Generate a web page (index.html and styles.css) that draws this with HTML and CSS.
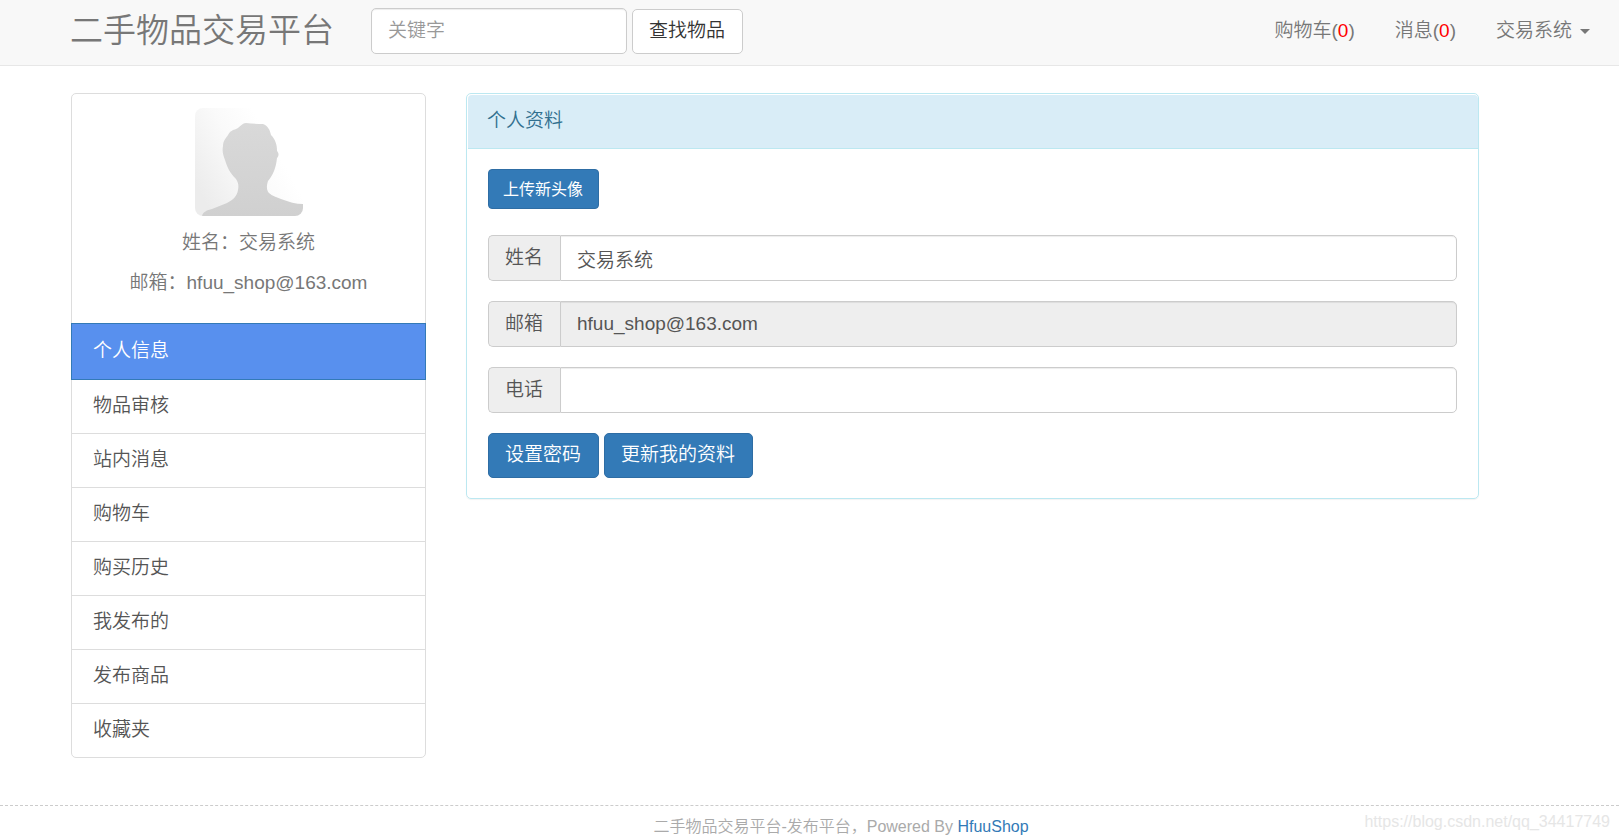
FILE: index.html
```html
<!DOCTYPE html>
<html lang="zh-CN">
<head>
<meta charset="utf-8">
<title>二手物品交易平台</title>
<link rel="stylesheet" href="styles.css">
</head>
<body>
<header class="navbar">
  <a class="brand" href="#">二手物品交易平台</a>
  <form class="search">
    <input class="control search-input" type="text" placeholder="关键字" aria-label="关键字">
    <button class="btn btn-default" type="button">查找物品</button>
  </form>
  <nav class="nav-links">
    <a href="#">购物车(<span class="count">0</span>)</a>
    <a href="#">消息(<span class="count">0</span>)</a>
    <a class="user-menu" href="#">交易系统<span class="caret"></span></a>
  </nav>
</header>
<main class="content">
  <aside class="sidebar">
    <div class="profile">
      <svg class="avatar" viewBox="0 0 108 108" role="img" aria-label="头像">
        <defs>
          <linearGradient id="back" x1="0" y1="0.7" x2="0.7" y2="0.3">
            <stop offset="0" stop-color="#ececec"/>
            <stop offset="0.6" stop-color="#fafafa"/>
            <stop offset="1" stop-color="#ffffff"/>
          </linearGradient>
          <linearGradient id="figure" x1="0" y1="0" x2="0" y2="1">
            <stop offset="0" stop-color="#d9d9d9"/>
            <stop offset="1" stop-color="#d0d0d0"/>
          </linearGradient>
        </defs>
        <rect width="108" height="108" fill="url(#back)"/>
        <path fill="url(#figure)" d="M51 15Q59 16 68 16C73 18 75 22 76 27C80 31 82 36 82 43C84 45 84 48 82 50C81 60 78 67 73 73C71 79 72 83 74 85C77 88 82 89 86 91C94 94 101 96 108 96V108H7C8 104 12 102 17 101C22 99 27 97 32 95C38 92 42 88 43 82C44 77 43 74 41 71C35 65 32 59 30 52C28 47 27 43 28 38C28 33 31 30 33 27C35 23 38 22 41 21C44 20 47 15 51 15Z"/>
      </svg>
      <p>姓名：交易系统</p>
      <p>邮箱：hfuu_shop@163.com</p>
    </div>
    <nav class="menu">
      <a class="active" href="#">个人信息</a>
      <a href="#">物品审核</a>
      <a href="#">站内消息</a>
      <a href="#">购物车</a>
      <a href="#">购买历史</a>
      <a href="#">我发布的</a>
      <a href="#">发布商品</a>
      <a href="#">收藏夹</a>
    </nav>
  </aside>
  <section class="panel">
    <h1 class="panel-heading">个人资料</h1>
    <form class="panel-body">
      <button class="btn btn-primary btn-upload" type="button">上传新头像</button>
      <div class="input-group">
        <label class="addon" for="name">姓名</label>
        <input class="control" id="name" type="text" value="交易系统">
      </div>
      <div class="input-group">
        <label class="addon" for="email">邮箱</label>
        <input class="control" id="email" type="text" value="hfuu_shop@163.com" readonly>
      </div>
      <div class="input-group">
        <label class="addon" for="phone">电话</label>
        <input class="control" id="phone" type="text">
      </div>
      <div class="actions">
        <button class="btn btn-primary" type="button">设置密码</button>
        <button class="btn btn-primary" type="button">更新我的资料</button>
      </div>
    </form>
  </section>
</main>
<footer class="footer">
  <p>二手物品交易平台-发布平台，Powered By <a href="#">HfuuShop</a></p>
  <span class="watermark">https://blog.csdn.net/qq_34417749</span>
</footer>
</body>
</html>
```
FILE: styles.css
```css
* {
  box-sizing: border-box;
}

body {
  margin: 0;
  background: #fff;
  color: #555;
  font-family: "Liberation Sans", "Noto Sans CJK SC", sans-serif;
  font-size: 19px;
  font-weight: 350;
  line-height: 27px;
}

a {
  color: inherit;
  text-decoration: none;
}

p {
  margin: 0;
}

.navbar {
  display: flex;
  align-items: flex-start;
  padding: 8px 29px 11px 70px;
  border-bottom: 1px solid #e7e7e7;
  background: #f8f8f8;
  color: #777;
}

.brand {
  margin-right: 37px;
  font-size: 33px;
  line-height: 46px;
  white-space: nowrap;
}

.search {
  display: flex;
  align-items: flex-end;
  gap: 5px;
}

.control {
  flex: 1;
  min-width: 0;
  height: 46px;
  padding: 8px 16px;
  border: 1px solid #ccc;
  border-radius: 5px;
  background: #fff;
  box-shadow: inset 0 1px 1px rgba(0, 0, 0, 0.075);
  color: #555;
  font: inherit;
}

.control::placeholder {
  color: #999;
  opacity: 1;
}

.control[readonly] {
  background: #eee;
}

.search-input {
  flex: none;
  width: 256px;
}

.btn {
  height: 45px;
  padding: 0 17px 2px 16px;
  border: 1px solid #2e6da4;
  border-radius: 5px;
  font: inherit;
}

.btn-default {
  border-color: #ccc;
  background: #fff;
  color: #333;
}

.btn-primary {
  background: #337ab7;
  color: #fff;
}

.nav-links {
  display: flex;
  gap: 40px;
  margin-left: auto;
  line-height: 46px;
}

.count {
  color: #f00;
}

.user-menu {
  display: flex;
  align-items: center;
  gap: 8px;
}

.caret {
  border-top: 5px solid #777;
  border-right: 5px solid transparent;
  border-left: 5px solid transparent;
}

.content {
  display: grid;
  grid-template-columns: 355fr 1013fr;
  align-items: start;
  gap: 40px;
  padding: 27px 140px 47px 71px;
}

.sidebar {
  border: 1px solid #ddd;
  border-radius: 5px;
}

.profile {
  display: flex;
  flex-direction: column;
  align-items: center;
  gap: 13px;
  padding: 14px 20px 27px;
  color: #777;
}

.avatar {
  width: 108px;
  height: 108px;
  border-radius: 8px;
}

.menu a {
  display: block;
  padding: 12px 21px 14px;
  border-top: 1px solid #ddd;
}

.menu .active {
  margin: 0 -1px;
  padding: 13px 21px 15px;
  border: 1px solid #337ab7;
  background: #5890ee;
  color: #fff;
}

.menu .active + a {
  border-top: 0;
}

.panel {
  border: 1px solid #bce8f1;
  border-radius: 5px;
  box-shadow: 0 1px 1px rgba(0, 0, 0, 0.05);
}

.panel-heading {
  margin: 1px 0 0 1px;
  padding: 12px 19px 14px;
  border-bottom: 1px solid #bce8f1;
  border-radius: 4px 4px 0 0;
  background: #d9edf7;
  color: #31708f;
  font-size: 19px;
  font-weight: 350;
}

.panel-body {
  display: flex;
  flex-direction: column;
  gap: 20px;
  padding: 20px 21px;
}

.btn-upload {
  align-self: flex-start;
  height: 40px;
  margin-bottom: 6px;
  padding: 0 15px 0 14px;
  border-radius: 4px;
  font-size: 16px;
  font-weight: 400;
}

.input-group {
  display: flex;
}

.addon {
  padding: 8px 17px 9px 16px;
  border: 1px solid #ccc;
  border-right: 0;
  border-radius: 5px 0 0 5px;
  background: #eee;
}

.input-group .control {
  border-radius: 0 5px 5px 0;
}

.actions {
  display: flex;
  gap: 5px;
}

.footer {
  position: relative;
  padding-top: 9px;
  border-top: 1px dashed #ccc;
  color: #aaa;
  font-size: 16px;
  line-height: 23px;
}

.footer p {
  padding-left: 63px;
  text-align: center;
}

.footer p a {
  color: #337ab7;
}

.watermark {
  position: absolute;
  top: 4px;
  right: 9px;
  color: #e6e6e6;
}
```
